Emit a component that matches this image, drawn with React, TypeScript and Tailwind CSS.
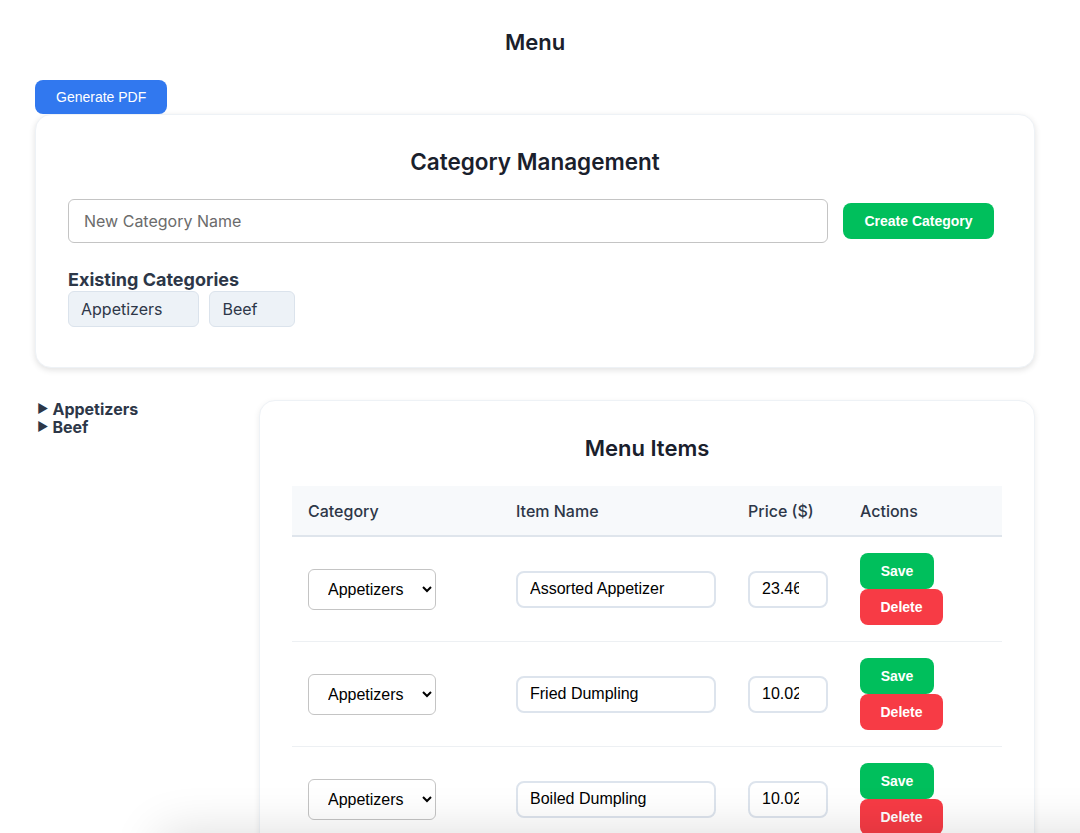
import { useState } from 'react'

type Item = { id: number; category: string; name: string; price: string }

const categories = ['Appetizers', 'Beef']

const initialItems: Item[] = [
  { id: 1, category: 'Appetizers', name: 'Assorted Appetizer', price: '23.46' },
  { id: 2, category: 'Appetizers', name: 'Fried Dumpling', price: '10.02' },
  { id: 3, category: 'Appetizers', name: 'Boiled Dumpling', price: '10.02' },
]

const arial = "font-['Liberation_Sans',Arial,sans-serif]"

export default function App() {
  const [items] = useState(initialItems)

  return (
    <div className="relative min-h-screen overflow-hidden bg-white font-['Inter','Noto_Sans',sans-serif] text-[#1e293b]">
      <div className="ml-[35px] w-[1000px]">
        <h1 className="pt-[28px] text-center text-[22px] leading-[28px] font-semibold text-[#1a202c]">Menu</h1>

        <button className={`mt-[24px] h-[34px] rounded-lg bg-[#3178ef] px-[21px] text-[14px] text-white ${arial}`}>
          Generate PDF
        </button>

        <section className="rounded-2xl border border-[#eef2f6] bg-white px-[32px] pt-[32px] pb-[40px] shadow-[0_2px_6px_rgba(0,0,0,0.12)]">
          <h2 className="text-center text-[22.5px] leading-[30px] font-semibold text-[#1a202c]">Category Management</h2>

          <div className="mt-[22px] flex items-center gap-[15px]">
            <input
              placeholder="New Category Name"
              className="h-[44px] w-[760px] rounded-md border border-[#c4c4c4] px-[15px] text-[16px] text-[#333] placeholder:text-[#6b6b6b] outline-none"
            />
            <button className={`h-[36px] w-[151px] rounded-lg bg-[#00bf5c] text-[14px] font-bold text-white ${arial}`}>
              Create Category
            </button>
          </div>

          <h3 className="mt-[26px] text-[18px] leading-[22px] font-bold text-[#2d3748]">Existing Categories</h3>
          <div className="flex gap-[10px]">
            {categories.map(c => (
              <span
                key={c}
                className="flex h-[36px] items-center rounded-md border border-[#dbe3ec] bg-[#edf2f7] pr-[36px] pl-[12px] text-[16px] text-[#2d3748]"
              >
                {c}
              </span>
            ))}
          </div>
        </section>

        <div className="mt-[32px] flex">
          <aside className="w-[224px] pl-[2px] text-[16px] leading-[18px] font-bold text-[#2d3748]">
            {categories.map(c => (
              <div key={c} className="flex items-center gap-[4px]">
                <span className="text-[12px]">▶</span>
                <span>{c}</span>
              </div>
            ))}
          </aside>

          <section className="flex-1 rounded-2xl border border-[#eef2f6] bg-white px-[32px] pt-[32px] pb-[32px] shadow-[0_2px_6px_rgba(0,0,0,0.08)]">
            <h2 className="text-center text-[22px] leading-[30px] font-semibold text-[#1a202c]">Menu Items</h2>

            <table className="mt-[23px] w-[710px] border-collapse text-left">
              <thead>
                <tr className="h-[50px] border-b-2 border-[#dfe5ec] bg-[#f7f9fb] text-[16px] font-medium text-[#2d3748]">
                  <th className="w-[208px] px-4 font-medium">Category</th>
                  <th className="w-[232px] px-4 font-medium">Item Name</th>
                  <th className="w-[112px] px-4 font-medium">Price ($)</th>
                  <th className="px-4 font-medium">Actions</th>
                </tr>
              </thead>
              <tbody>
                {items.map(item => (
                  <tr key={item.id} className="border-b border-[#edf0f3]">
                    <td className="px-4 py-4">
                      <select
                        defaultValue={item.category}
                        className={`h-[41px] w-[128px] rounded-md border border-[#c4c4c4] bg-white pl-[15px] pr-[6px] text-[16px] text-black ${arial}`}
                      >
                        {categories.map(c => (
                          <option key={c}>{c}</option>
                        ))}
                      </select>
                    </td>
                    <td className="px-4 py-4">
                      <input
                        readOnly
                        value={item.name}
                        className={`h-[37px] w-[200px] rounded-lg border-2 border-[#dde4ed] px-[12px] text-[16px] text-black outline-none ${arial}`}
                      />
                    </td>
                    <td className="px-4 py-4">
                      <input
                        readOnly
                        value={item.price}
                        className={`h-[37px] w-[80px] rounded-lg border-2 border-[#dde4ed] pl-[12px] pr-[27px] text-[16px] text-black outline-none ${arial}`}
                      />
                    </td>
                    <td className="px-4 py-4">
                      <div className="flex flex-col items-start">
                        <button className={`h-[36px] w-[74px] rounded-lg bg-[#00bf5c] text-[14px] font-bold text-white ${arial}`}>
                          Save
                        </button>
                        <button className={`h-[36px] w-[83px] rounded-lg bg-[#f73b45] text-[14px] font-bold text-white ${arial}`}>
                          Delete
                        </button>
                      </div>
                    </td>
                  </tr>
                ))}
              </tbody>
            </table>
          </section>
        </div>
      </div>

      <div className="pointer-events-none fixed top-[833px] right-[-100px] left-[160px] h-[60px] bg-white shadow-[0_0_50px_rgba(0,0,0,0.14)]" />
    </div>
  )
}
